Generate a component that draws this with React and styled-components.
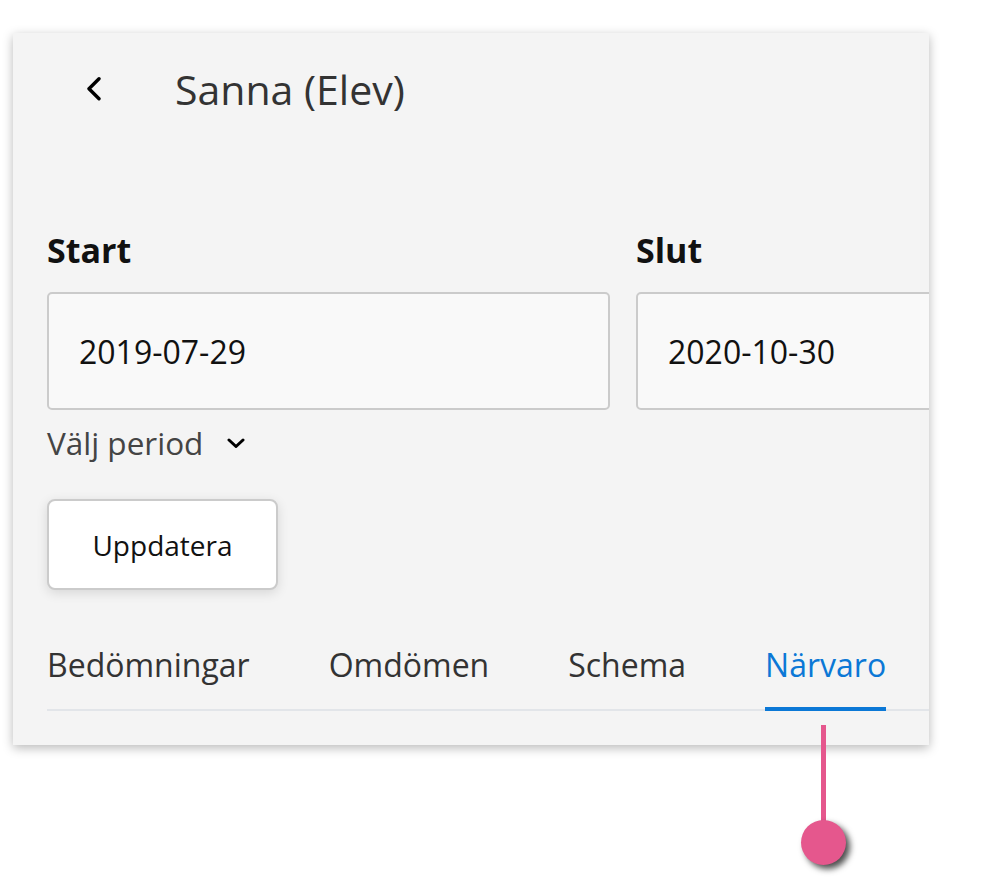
import React from "react";
import styled, { createGlobalStyle } from "styled-components";

const Global = createGlobalStyle`
  html, body { margin: 0; padding: 0; background: #ffffff; }
  body { font-family: "Open Sans", "Noto Sans", Arial, sans-serif; }
  * { box-sizing: border-box; }
`;

const Page = styled.div`
  position: relative;
  width: 981px;
  height: 884px;
  padding: 33px 0 0 13px;
`;

const Panel = styled.section`
  width: 916px;
  height: 712px;
  background: #f4f4f4;
  box-shadow: 0 3px 10px rgba(0, 0, 0, 0.28);
  overflow: hidden;
  padding: 32px 0 34px 34px;
  display: flex;
  flex-direction: column;
`;

const Header = styled.header`
  display: flex;
  align-items: center;
  height: 48px;
`;

const BackButton = styled.button`
  border: 0;
  background: transparent;
  padding: 0;
  margin: 0 0 0 39px;
  width: 20px;
  height: 24px;
  display: flex;
  align-items: center;
  justify-content: flex-start;
  color: #000;
  cursor: pointer;
`;

const Title = styled.h1`
  margin: 0 0 0 69px;
  font-size: 41px;
  line-height: 48px;
  font-weight: 400;
  color: #333333;
`;

const DateGrid = styled.div`
  display: grid;
  grid-template-columns: 563px 563px;
  column-gap: 26px;
  margin-top: 117px;
`;

const Field = styled.div`
  display: flex;
  flex-direction: column;
`;

const Label = styled.label`
  font-size: 34px;
  line-height: 40px;
  font-weight: 700;
  color: #111111;
  margin-bottom: 22px;
`;

const DateBox = styled.div`
  height: 118px;
  border: 2px solid #cbcbcb;
  border-radius: 5px;
  background: #f9f9f9;
  display: flex;
  align-items: center;
  padding: 2px 0 0 30px;
  font-size: 32px;
  line-height: 40px;
  color: #111111;
`;

const PeriodToggle = styled.button`
  align-self: flex-start;
  display: flex;
  align-items: center;
  gap: 24px;
  border: 0;
  background: transparent;
  padding: 0;
  margin-top: 13px;
  font-family: inherit;
  font-size: 31.5px;
  line-height: 40px;
  color: #444444;
  cursor: pointer;
`;

const UpdateButton = styled.button`
  align-self: flex-start;
  margin-top: 36px;
  width: 231px;
  height: 91px;
  background: #ffffff;
  border: 2px solid #cbcbcb;
  border-radius: 8px;
  box-shadow: 0 3px 12px rgba(0, 0, 0, 0.12);
  font-family: inherit;
  font-size: 28px;
  color: #111111;
  cursor: pointer;
`;

const Tabs = styled.nav`
  display: flex;
  gap: 79px;
  margin-top: 55px;
  border-bottom: 2px solid #e2e5e9;
`;

const Tab = styled.button`
  border: 0;
  background: transparent;
  padding: 0 0 22px;
  margin-bottom: -2px;
  font-family: inherit;
  font-size: 32px;
  line-height: 40px;
  color: ${(p) => (p.$active ? "#0b78d6" : "#333333")};
  border-bottom: 4px solid ${(p) => (p.$active ? "#0b78d6" : "transparent")};
  cursor: pointer;
`;

const Pin = styled.div`
  position: absolute;
  left: 801px;
  top: 725px;
  width: 45px;
  height: 140px;
  display: flex;
  flex-direction: column;
  align-items: center;
`;

const PinStem = styled.div`
  width: 5px;
  height: 100px;
  background: #e5578d;
`;

const PinHead = styled.div`
  width: 45px;
  height: 45px;
  margin-top: -5px;
  border-radius: 50%;
  background: #e5578d;
  box-shadow: 4px 4px 6px rgba(0, 0, 0, 0.7);
`;

const ChevronLeft = () => (
  <svg width="16" height="24" viewBox="0 0 16 24" fill="none">
    <path d="M13 1.8 L3 11.8 L13 21.8" stroke="#000" strokeWidth="3.4" strokeLinecap="round" strokeLinejoin="round" />
  </svg>
);

const ChevronDown = () => (
  <svg width="18" height="10" viewBox="0 0 18 10" fill="none">
    <path d="M2 2 L9 8.5 L16 2" stroke="#000" strokeWidth="3" strokeLinecap="round" strokeLinejoin="round" />
  </svg>
);

const tabs = ["Bedömningar", "Omdömen", "Schema", "Närvaro"];

export default function App() {
  return (
    <>
      <Global />
      <Page>
        <Panel>
          <Header>
            <BackButton aria-label="Tillbaka">
              <ChevronLeft />
            </BackButton>
            <Title>Sanna (Elev)</Title>
          </Header>
          <DateGrid>
            <Field>
              <Label>Start</Label>
              <DateBox>2019-07-29</DateBox>
            </Field>
            <Field>
              <Label>Slut</Label>
              <DateBox>2020-10-30</DateBox>
            </Field>
          </DateGrid>
          <PeriodToggle>
            Välj period
            <ChevronDown />
          </PeriodToggle>
          <UpdateButton>Uppdatera</UpdateButton>
          <Tabs>
            {tabs.map((t) => (
              <Tab key={t} $active={t === "Närvaro"}>
                {t}
              </Tab>
            ))}
          </Tabs>
        </Panel>
        <Pin>
          <PinStem />
          <PinHead />
        </Pin>
      </Page>
    </>
  );
}
